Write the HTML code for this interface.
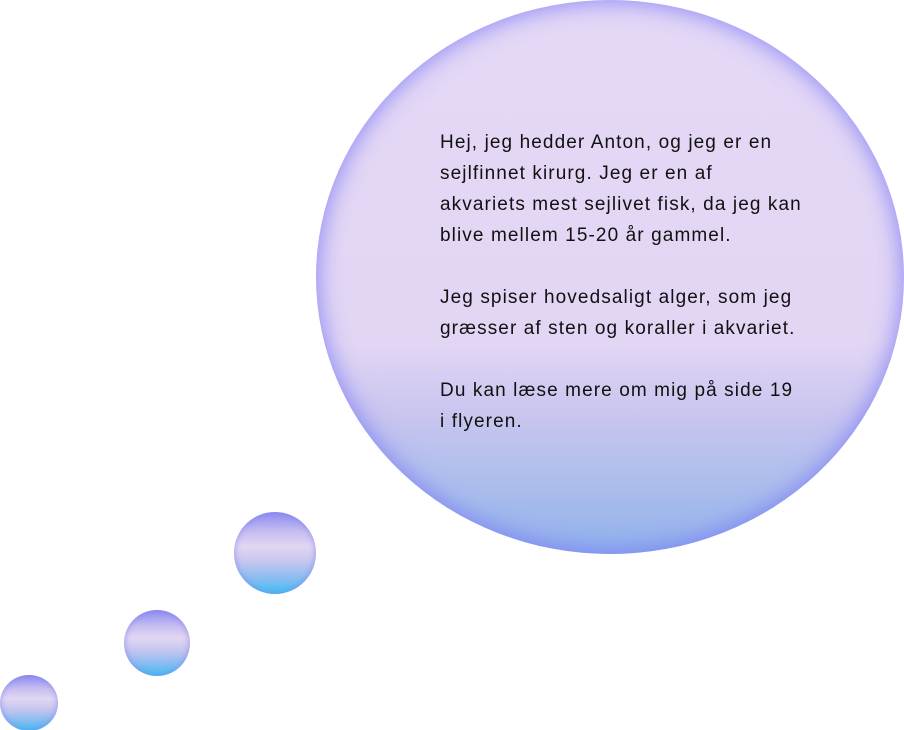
<!DOCTYPE html>
<html><head><style>
html,body{margin:0;padding:0;background:#fff;width:904px;height:730px;overflow:hidden;position:relative}
.e{position:absolute;border-radius:50%}
.big{left:316px;top:0;width:588px;height:554px;
background:linear-gradient(180deg,#e4d8f6 0%,#e2d6f4 62%,#c8c5ef 75%,#abbdec 88%,#90b2ec 100%);
box-shadow:inset 0 0 22px 3px rgba(120,120,245,.75)}
.s{background:linear-gradient(180deg,#8c8cf2 0%,#c8bff0 25%,#e2d6f2 42%,#c7c6ef 60%,#86bcf0 82%,#3cc0f2 100%);
box-shadow:inset 0 0 6px 1px rgba(130,130,240,.6)}
.t{position:absolute;left:440px;top:127px;font-family:"Liberation Sans",sans-serif;font-size:19px;line-height:31px;color:#111;white-space:nowrap;letter-spacing:1.1px}
</style></head><body>
<div class="e big"></div>
<div class="e s" style="left:234px;top:512px;width:82px;height:82px"></div>
<div class="e s" style="left:124px;top:610px;width:66px;height:66px"></div>
<div class="e s" style="left:0;top:675px;width:58px;height:56px"></div>
<div class="t">Hej, jeg hedder Anton, og jeg er en<br>sejlfinnet kirurg. Jeg er en af<br>akvariets mest sejlivet fisk, da jeg kan<br>blive mellem 15-20 år gammel.<br><br>Jeg spiser hovedsaligt alger, som jeg<br>græsser af sten og koraller i akvariet.<br><br>Du kan læse mere om mig på side 19<br>i flyeren.</div>
</body></html>
